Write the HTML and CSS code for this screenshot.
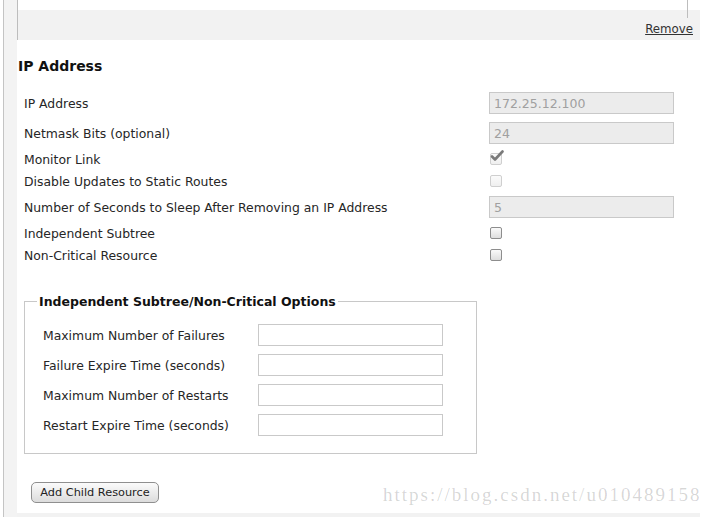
FILE: index.html
```
<!DOCTYPE html>
<html>
<head>
<meta charset="utf-8">
<title>IP Address Resource</title>
<link rel="stylesheet" href="styles.css">
</head>
<body>
<div class="frame">
  <div class="content">
    <div class="top-panel">
      <div class="top-rule"></div>
      <div class="remove-row"><a href="#" class="remove">Remove</a></div>
    </div>

    <h2 class="heading">IP Address</h2>

    <div class="props">
      <div class="row row-input">
        <span class="label">IP Address</span>
        <input class="ro-input" type="text" value="172.25.12.100" disabled>
      </div>
      <div class="row row-input">
        <span class="label">Netmask Bits (optional)</span>
        <input class="ro-input" type="text" value="24" disabled>
      </div>
      <div class="row row-check">
        <span class="label">Monitor Link</span>
        <span class="cb cb-disabled">
          <svg class="tick" width="14" height="12" viewBox="0 0 14 12"><path d="M2 6.5 L5 9.5 L12.5 1.5" fill="none" stroke="#7a7a7a" stroke-width="2.6" stroke-linecap="round" stroke-linejoin="round"/></svg>
        </span>
      </div>
      <div class="row row-check">
        <span class="label">Disable Updates to Static Routes</span>
        <span class="cb cb-disabled"></span>
      </div>
      <div class="row row-input">
        <span class="label">Number of Seconds to Sleep After Removing an IP Address</span>
        <input class="ro-input" type="text" value="5" disabled>
      </div>
      <div class="row row-check">
        <span class="label">Independent Subtree</span>
        <span class="cb"></span>
      </div>
      <div class="row row-check">
        <span class="label">Non-Critical Resource</span>
        <span class="cb"></span>
      </div>
    </div>

    <fieldset class="options">
      <legend>Independent Subtree/Non-Critical Options</legend>
      <div class="opt-row">
        <span class="opt-label">Maximum Number of Failures</span>
        <input class="opt-input" type="text">
      </div>
      <div class="opt-row">
        <span class="opt-label">Failure Expire Time (seconds)</span>
        <input class="opt-input" type="text">
      </div>
      <div class="opt-row">
        <span class="opt-label">Maximum Number of Restarts</span>
        <input class="opt-input" type="text">
      </div>
      <div class="opt-row">
        <span class="opt-label">Restart Expire Time (seconds)</span>
        <input class="opt-input" type="text">
      </div>
    </fieldset>

    <div class="button-row">
      <button class="btn" type="button">Add Child Resource</button>
    </div>
    <div class="footer-strip"></div>
  </div>
</div>
<div class="watermark">https://blog.csdn.net/u010489158</div>
</body>
</html>
```

FILE: styles.css
```
html, body {
  margin: 0;
  padding: 0;
  background: #fff;
}

body {
  font-family: "DejaVu Sans", Verdana, sans-serif;
  color: #2a2a2a;
  position: relative;
  height: 517px;
  overflow: hidden;
}

.frame {
  margin-left: 3px;
  border-left: 1px solid #c4c4c4;
  padding-left: 13px;
  background: #f3f3f3;
  width: 683px;
  height: 517px;
}

.content {
  background: #fff;
  width: 683px;
  height: 517px;
}

.top-panel {
  height: 40px;
  border-left: 1px solid #bdbdbd;
  background: linear-gradient(#fff 0, #fff 10px, #f2f2f2 10px, #f2f2f2 100%);
  box-sizing: border-box;
}

.top-rule {
  width: 669px;
  height: 18px;
  border-right: 1px solid #bdbdbd;
}

.remove-row {
  text-align: right;
  padding-right: 7px;
  line-height: 20px;
  height: 22px;
}

.remove {
  color: #333;
  font-size: 11.8px;
  text-decoration: underline;
}

.heading {
  margin: 18px 0 0 1px;
  font-size: 14px;
  line-height: 17px;
  font-weight: bold;
  color: #111;
}

.props {
  margin-top: 13px;
  padding-left: 7px;
}

.row {
  display: flex;
  align-items: center;
}

.row-input {
  height: 30px;
}

.row-check {
  height: 22px;
}

.label {
  width: 465px;
  font-size: 12.4px;
  color: #262626;
}

.ro-input {
  box-sizing: border-box;
  width: 185px;
  height: 22px;
  margin: 0;
  padding: 0 4px;
  border: 1px solid #c9c9c9;
  background: #ececec;
  color: #a0a0a0;
  font-family: "DejaVu Sans", Verdana, sans-serif;
  font-size: 12.5px;
}

.cb {
  position: relative;
  box-sizing: border-box;
  display: block;
  width: 12px;
  height: 12px;
  margin-left: 1px;
  border: 1px solid #8d8d8d;
  border-radius: 2px;
  background: linear-gradient(#fafafa, #dedede);
}

.cb-disabled {
  border-color: #cfcfcf;
  background: linear-gradient(#fbfbfb, #efefef);
}

.tick {
  position: absolute;
  left: -1px;
  top: -4px;
}

.options {
  box-sizing: border-box;
  width: 453px;
  margin: 28px 0 0 7px;
  padding: 11px 10px 13px 18px;
  border: 1px solid #c8c8c8;
}

.options legend {
  margin-left: -6px;
  padding: 0 2px;
  font-size: 12.5px;
  line-height: 15px;
  font-weight: bold;
  color: #111;
}

.opt-row {
  display: flex;
  align-items: center;
  height: 30px;
}

.opt-label {
  width: 215px;
  font-size: 12.4px;
  color: #262626;
}

.opt-input {
  box-sizing: border-box;
  width: 185px;
  height: 22px;
  margin: 0;
  border: 1px solid #c9c9c9;
  background: #fff;
}

.button-row {
  margin-top: 27px;
  padding-left: 14px;
  height: 21px;
}

.btn {
  box-sizing: border-box;
  height: 21px;
  width: 128px;
  padding: 0;
  border: 1px solid #8f8f8f;
  border-radius: 5px;
  background: linear-gradient(#fbfbfb, #dcdcdc);
  color: #222;
  font-family: "DejaVu Sans", Verdana, sans-serif;
  font-size: 11.3px;
}

.footer-strip {
  margin-top: 11px;
  height: 4px;
  background: #f2f2f2;
}

.watermark {
  position: absolute;
  left: 383px;
  top: 484px;
  font-family: "Liberation Serif", "Times New Roman", serif;
  font-size: 19px;
  line-height: 22px;
  letter-spacing: 2px;
  color: rgba(0, 0, 0, 0.17);
  white-space: nowrap;
}
```
